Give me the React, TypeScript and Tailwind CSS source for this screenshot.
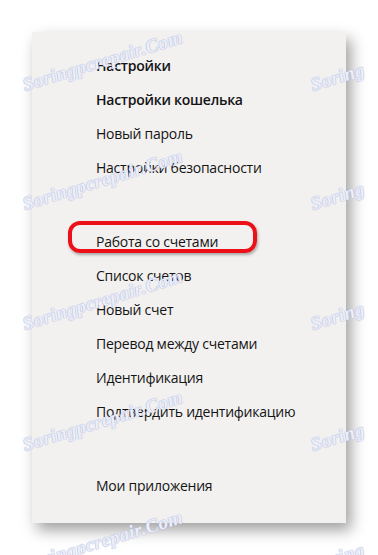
import React from "react";

const groups = [
  [
    { label: "Настройки", bold: true },
    { label: "Настройки кошелька", bold: true },
    { label: "Новый пароль" },
    { label: "Настройки безопасности" },
  ],
  [
    { label: "Работа со счетами", marked: true },
    { label: "Список счетов" },
    { label: "Новый счет" },
    { label: "Перевод между счетами" },
    { label: "Идентификация" },
    { label: "Подтвердить идентификацию" },
  ],
  [{ label: "Мои приложения" }],
];

// watermark rows: bottom-left start of each line of text
const rows = [93, 212, 332, 453, 573];

const App = () => {
  return (
    <div className="relative w-[378px] h-[555px] overflow-hidden bg-white pl-[32px] pt-[32px] font-['Open_Sans',sans-serif]">
      {/* --- MENU PANEL --- */}
      <div className="w-[314px] h-[491px] bg-[#f2f1f0] pl-[64px] pt-[16px] shadow-[5px_7px_14px_rgba(0,0,0,0.38)] flex flex-col gap-[40px]">
        {groups.map((group, gi) => (
          <div key={gi} className="flex flex-col">
            {group.map((item) => (
              <div
                key={item.label}
                className={`relative h-[34px] flex items-center text-[14px] tracking-[-0.25px] text-[#141414] ${
                  item.bold ? "font-semibold" : "font-normal"
                }`}
              >
                {item.marked && (
                  <span className="absolute left-[-28px] top-[-3px] w-[189px] h-[32px] border-[4px] border-[#ec1018] rounded-[12px] shadow-[1px_2px_3px_rgba(0,0,0,0.3)]" />
                )}
                <span className="relative">{item.label}</span>
              </div>
            ))}
          </div>
        ))}
      </div>

      {/* watermark */}
      {rows.map((y) => (
        <React.Fragment key={y}>
          <span
            className="pointer-events-none absolute whitespace-nowrap leading-none origin-bottom-left font-['Liberation_Serif',serif] italic font-bold text-[19px] tracking-[0.4px] text-[#eceef8] [text-shadow:0_0_1px_#a9b1dd,0_0_1px_#a9b1dd]"
            style={{ left: 26, top: y - 18, transform: "rotate(-17deg)" }}
          >
            Soringpcrepair.Com
          </span>
          <span
            className="pointer-events-none absolute whitespace-nowrap leading-none origin-bottom-left font-['Liberation_Serif',serif] italic font-bold text-[19px] tracking-[0.4px] text-[#eceef8] [text-shadow:0_0_1px_#a9b1dd,0_0_1px_#a9b1dd]"
            style={{ left: 314, top: y - 18, transform: "rotate(-17deg)" }}
          >
            Soring
          </span>
        </React.Fragment>
      ))}
    </div>
  );
};

export default App;
